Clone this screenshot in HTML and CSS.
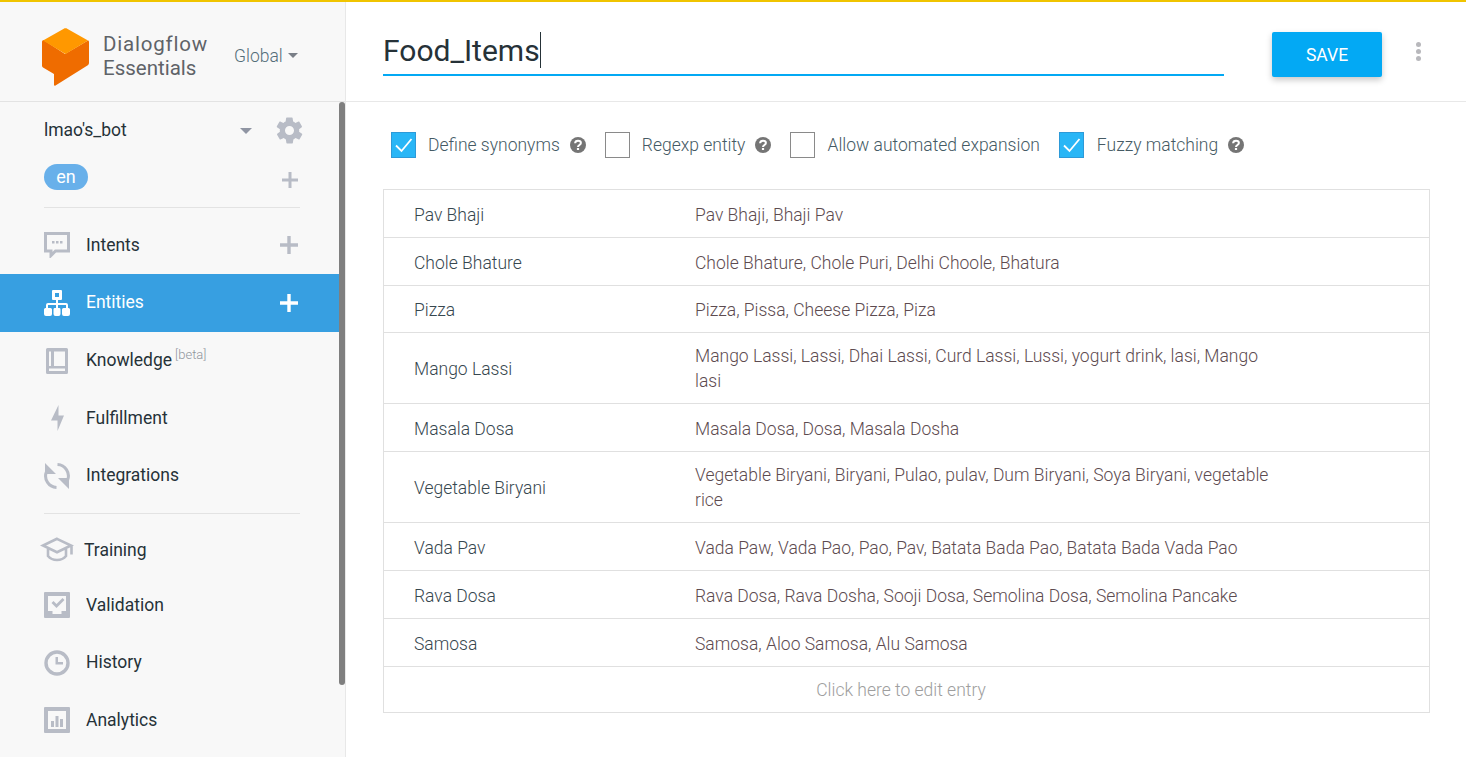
FILE: index.html
```html
<!DOCTYPE html>
<html lang="en">
<head>
  <meta charset="UTF-8">
  <title>Dialogflow Essentials</title>
  <link rel="stylesheet" href="styles.css">
</head>
<body>
  <div class="app">
    <aside class="sidebar">
      <div class="brand">
        <svg class="logo" width="47" height="59" viewBox="0 0 47 59">
          <path fill="#ef6c00" d="M1.500 12 23 26l23-13.500c.6 0 1 .6 1 1.500v21c0 1-.4 1.800-1.200 2.300L13.500 57.600c-.8.500-1.500.1-1.500-.8V46L1 39.500c-.6-.4-1-1-1-1.800V14c0-.8.600-2 1.500-2z"/>
          <path fill="#ff9800" d="M1 12.500 21.800.7c1-.6 2.400-.6 3.400 0L46 12.500 23.500 26z"/>
        </svg>
        <div class="brand-name"><span class="brand-first">Dialogflow</span><br>Essentials</div>
        <div class="region">Global <span class="caret"></span></div>
      </div>
      <div class="side-scroll">
        <div class="agent-row">
          <span class="agent-name">lmao's_bot</span>
          <span class="caret caret-agent"></span>
          <svg class="gear" width="31" height="31" viewBox="0 0 24 24"><path fill="#b8bcc6" d="M19.400 13c.1-.3.100-.7.100-1s0-.7-.1-1l2.100-1.600c.2-.2.200-.4.100-.6l-2-3.500c-.1-.2-.4-.3-.6-.2l-2.500 1c-.5-.4-1.100-.7-1.700-1l-.4-2.700c0-.2-.2-.4-.5-.4h-4c-.3 0-.5.200-.5.400l-.4 2.700c-.6.300-1.200.6-1.700 1l-2.500-1c-.2-.1-.5 0-.6.200l-2 3.500c-.1.200-.1.400.1.600L4.600 11c-.1.300-.1.700-.1 1s0 .7.100 1l-2.100 1.600c-.2.200-.2.400-.1.600l2 3.500c.1.200.4.300.6.200l2.500-1c.5.400 1.100.7 1.700 1l.4 2.700c0 .2.200.4.500.4h4c.3 0 .5-.2.500-.4l.4-2.700c.6-.3 1.200-.6 1.700-1l2.500 1c.2.100.5 0 .6-.2l2-3.500c.1-.2.100-.4-.1-.6zM12 15.500a3.500 3.500 0 1 1 0-7 3.500 3.500 0 0 1 0 7z"/></svg>
        </div>
        <div class="lang-row">
          <span class="lang">en</span>
          <svg class="plus plus-lang" width="16" height="16" viewBox="0 0 16 16"><path fill="#b8bcc6" d="M6.500 0h3v6.500H16v3H9.500V16h-3V9.500H0v-3h6.500z"/></svg>
        </div>
        <hr class="rule rule-top">
        <nav class="nav">
          <a class="nav-item">
            <svg class="nav-icon" width="26" height="26" viewBox="0 0 26 26"><path fill="none" stroke="#b8bcc6" stroke-width="3" d="M1.500 1.500h23V19H11.500l-4.500 4.500V19H1.500z"/><path fill="#b8bcc6" d="M8 9h2.500v2.500H8zm4 0h2.500v2.500H12zm4 0h2.500v2.500H16z"/></svg>
            <span>Intents</span>
            <svg class="plus" width="20" height="20" viewBox="0 0 20 20"><path fill="#b8bcc6" d="M8.300 1h3.400v7.300H19v3.400h-7.300V19H8.300v-7.300H1V8.300h7.300z"/></svg>
          </a>
          <a class="nav-item active">
            <svg class="nav-icon" width="26" height="26" viewBox="0 0 26 26"><path fill="#fff" d="M9 0h8a1 1 0 0 1 1 1v8a1 1 0 0 1-1 1h-3v3h8a2 2 0 0 1 2 2v3h-2v-3h-8v3h-2v-3H4v3H2v-3a2 2 0 0 1 2-2h8v-3H9a1 1 0 0 1-1-1V1a1 1 0 0 1 1-1zm2 3v4h4V3zM1.500 18h5A1.500 1.500 0 0 1 8 19.500v4.500a2 2 0 0 1-2 2H2a2 2 0 0 1-2-2v-4.500A1.500 1.500 0 0 1 1.500 18zm9 0h5a1.500 1.500 0 0 1 1 1.500v4.500a2 2 0 0 1-2 2h-3a2 2 0 0 1-2-2v-4.500a1.500 1.500 0 0 1 1-1.500zm9 0h5a1.500 1.500 0 0 1 1.500 1.500v4.500a2 2 0 0 1-2 2h-4a2 2 0 0 1-2-2v-4.500a1.500 1.500 0 0 1 1.500-1.500z"/></svg>
            <span>Entities</span>
            <svg class="plus" width="20" height="20" viewBox="0 0 20 20"><path fill="#fff" d="M8.300 1h3.400v7.300H19v3.400h-7.300V19H8.300v-7.300H1V8.300h7.300z"/></svg>
          </a>
          <a class="nav-item">
            <svg class="nav-icon" width="26" height="26" viewBox="0 0 26 26"><path fill="#b8bcc6" fill-rule="evenodd" d="M3.500 0h19A1.500 1.500 0 0 1 24 1.500v23a1.500 1.500 0 0 1-1.500 1.500h-19A1.500 1.500 0 0 1 2 24.500v-23A1.500 1.500 0 0 1 3.500 0zM5 3.500v14.500h2V3.500zm5 0v14.500h11V3.500zM5 20.500V23h16v-2.500z"/></svg>
            <span>Knowledge<sup class="beta">[beta]</sup></span>
          </a>
          <a class="nav-item">
            <svg class="nav-icon" width="26" height="26" viewBox="0 0 26 26"><path fill="#b8bcc6" d="M14.500 0v10.500H20L13.500 26V15.500H7z"/></svg>
            <span>Fulfillment</span>
          </a>
          <a class="nav-item">
            <svg class="nav-icon" width="26" height="26" viewBox="0 0 26 26"><path fill="none" stroke="#b8bcc6" stroke-width="3" d="M12.500 24.400A11.400 11.400 0 0 1 2.500 8.600M13.500 1.600A11.400 11.400 0 0 1 23.500 17.400"/><path fill="#b8bcc6" d="M1 0v11h11zM25 26V15H14z"/></svg>
            <span>Integrations</span>
          </a>
        </nav>
        <hr class="rule rule-mid">
        <nav class="nav nav-lower">
          <a class="nav-item nav-training">
            <svg class="nav-icon icon-cap" width="34" height="25" viewBox="0 0 34 25"><path fill="none" stroke="#b8bcc6" stroke-width="2.600" d="M17 1.800 31 8.500 17 15.200 3 8.500zM8 12v7c2 2.500 5.500 4 9 4s7-1.500 9-4v-7M31.500 8.500v9"/></svg>
            <span>Training</span>
          </a>
          <a class="nav-item">
            <svg class="nav-icon" width="26" height="26" viewBox="0 0 26 26"><path fill="#b8bcc6" fill-rule="evenodd" d="M1 0h24a1 1 0 0 1 1 1v24a1 1 0 0 1-1 1H1a1 1 0 0 1-1-1V1a1 1 0 0 1 1-1zm3 4v15h4.500v3h9v-3H22V4zm3.500 7 2-2 3 3 6-6 2 2-8 8z"/></svg>
            <span>Validation</span>
          </a>
          <a class="nav-item">
            <svg class="nav-icon" width="26" height="26" viewBox="0 0 26 26"><circle cx="13" cy="13" r="11" fill="none" stroke="#b8bcc6" stroke-width="3.400"/><path fill="#b8bcc6" d="M11.500 7H14v5h5v2.500h-7.500z"/></svg>
            <span>History</span>
          </a>
          <a class="nav-item">
            <svg class="nav-icon" width="26" height="26" viewBox="0 0 26 26"><path fill="#b8bcc6" fill-rule="evenodd" d="M1 0h24a1 1 0 0 1 1 1v24a1 1 0 0 1-1 1H1a1 1 0 0 1-1-1V1a1 1 0 0 1 1-1zm3 4v18h18V4zm3 10h3v6H7zm4.500-5h3v11h-3zm4.500 3h3v8h-3z"/></svg>
            <span>Analytics</span>
          </a>
        </nav>
        <div class="scrollbar"></div>
      </div>
    </aside>
    <main class="main">
      <header class="topbar">
        <div class="title-field">Food_Items<span class="cursor"></span></div>
        <button class="save-btn">SAVE</button>
        <div class="more"><i></i><i></i><i></i></div>
      </header>
      <section class="content">
        <div class="options">
          <label class="option">
            <span class="check checked"><svg width="24" height="24" viewBox="0 0 24 24"><path fill="none" stroke="#fff" stroke-width="1.800" d="m4 12.500 5.500 5.500 10-12"/></svg></span>
            <span class="option-text">Define synonyms</span>
            <svg class="help" width="16" height="16" viewBox="0 0 16 16"><circle cx="8" cy="8" r="8" fill="#757575"/><path fill="none" stroke="#fff" stroke-width="2" d="M5.100 6.200C5.200 4.500 6.400 3.700 8 3.700c1.700 0 2.900.9 2.900 2.300 0 2-2.900 2-2.900 4"/><path fill="#fff" d="M6.900 11h2.200v2H6.900z"/></svg>
          </label>
          <label class="option">
            <span class="check"></span>
            <span class="option-text">Regexp entity</span>
            <svg class="help" width="16" height="16" viewBox="0 0 16 16"><circle cx="8" cy="8" r="8" fill="#757575"/><path fill="none" stroke="#fff" stroke-width="2" d="M5.100 6.200C5.200 4.500 6.400 3.700 8 3.700c1.700 0 2.900.9 2.900 2.300 0 2-2.900 2-2.900 4"/><path fill="#fff" d="M6.900 11h2.200v2H6.900z"/></svg>
          </label>
          <label class="option">
            <span class="check"></span>
            <span class="option-text">Allow automated expansion</span>
          </label>
          <label class="option">
            <span class="check checked"><svg width="24" height="24" viewBox="0 0 24 24"><path fill="none" stroke="#fff" stroke-width="1.800" d="m4 12.500 5.500 5.500 10-12"/></svg></span>
            <span class="option-text">Fuzzy matching</span>
            <svg class="help" width="16" height="16" viewBox="0 0 16 16"><circle cx="8" cy="8" r="8" fill="#757575"/><path fill="none" stroke="#fff" stroke-width="2" d="M5.100 6.200C5.200 4.500 6.400 3.700 8 3.700c1.700 0 2.900.9 2.900 2.300 0 2-2.900 2-2.900 4"/><path fill="#fff" d="M6.900 11h2.200v2H6.900z"/></svg>
          </label>
        </div>
        <div class="entries">
          <div class="entry"><div class="entry-name">Pav Bhaji</div><div class="entry-syn">Pav Bhaji, Bhaji Pav</div></div>
          <div class="entry"><div class="entry-name">Chole Bhature</div><div class="entry-syn">Chole Bhature, Chole Puri, Delhi Choole, Bhatura</div></div>
          <div class="entry"><div class="entry-name">Pizza</div><div class="entry-syn">Pizza, Pissa, Cheese Pizza, Piza</div></div>
          <div class="entry entry-tall"><div class="entry-name">Mango Lassi</div><div class="entry-syn">Mango Lassi, Lassi, Dhai Lassi, Curd Lassi, Lussi, yogurt drink, lasi, Mango lasi</div></div>
          <div class="entry"><div class="entry-name">Masala Dosa</div><div class="entry-syn">Masala Dosa, Dosa, Masala Dosha</div></div>
          <div class="entry entry-tall"><div class="entry-name">Vegetable Biryani</div><div class="entry-syn">Vegetable Biryani, Biryani, Pulao, pulav, Dum Biryani, Soya Biryani, vegetable rice</div></div>
          <div class="entry"><div class="entry-name">Vada Pav</div><div class="entry-syn">Vada Paw, Vada Pao, Pao, Pav, Batata Bada Pao, Batata Bada Vada Pao</div></div>
          <div class="entry"><div class="entry-name">Rava Dosa</div><div class="entry-syn">Rava Dosa, Rava Dosha, Sooji Dosa, Semolina Dosa, Semolina Pancake</div></div>
          <div class="entry"><div class="entry-name">Samosa</div><div class="entry-syn">Samosa, Aloo Samosa, Alu Samosa</div></div>
          <div class="entry-add">Click here to edit entry</div>
        </div>
      </section>
    </main>
  </div>
</body>
</html>
```
FILE: styles.css
```css
* { box-sizing: border-box; }

html, body { height: 100%; }

body {
  margin: 0;
  overflow: hidden;
  background: #fff;
  color: #263238;
  font-family: Roboto, "Liberation Sans", sans-serif;
  font-size: 17.5px;
}

.app {
  display: flex;
  height: 757px;
  border-top: 2px solid #f0c400;
}

/* sidebar */
.sidebar {
  width: 346px;
  flex: none;
  display: flex;
  flex-direction: column;
  background: #f8f8f8;
  border-right: 1px solid #e8e8e8;
}

.brand {
  height: 100px;
  flex: none;
  display: flex;
  align-items: center;
  padding: 0 0 0 42px;
  border-bottom: 1px solid #e3e3e3;
}

.logo { flex: none; margin-top: 11px; }

.brand-name {
  margin-left: 14px;
  width: 131px;
  color: #5f6368;
  font-size: 20.5px;
  line-height: 24px;
  margin-top: 9px;
}

.brand-first { letter-spacing: .8px; }

.region {
  display: flex;
  align-items: center;
  color: #546e7a;
  font-size: 17.500px;
  font-weight: 300;
  margin-top: 8px;
}

.caret {
  display: inline-block;
  width: 0;
  height: 0;
  margin-left: 5px;
  border-left: 5px solid transparent;
  border-right: 5px solid transparent;
  border-top: 5px solid #7a7f87;
}

.side-scroll { position: relative; flex: 1; overflow: hidden; }

.scrollbar {
  position: absolute;
  top: 0;
  right: 0;
  width: 6px;
  height: 583px;
  border-radius: 3px;
  background: #7f7f7f;
}

.agent-row {
  display: flex;
  align-items: center;
  height: 56px;
  padding: 0 40px 0 44px;
}

.agent-name { flex: 1; }

.caret-agent {
  margin: 2px 22px 0 0;
  border-left-width: 6px;
  border-right-width: 6px;
  border-top: 6px solid #9095a3;
}

.gear { flex: none; }

.lang-row {
  display: flex;
  align-items: center;
  justify-content: space-between;
  height: 38px;
  padding: 0 47px 0 44px;
}

.lang {
  width: 44px;
  height: 26px;
  border-radius: 13px;
  background: #68b0ea;
  color: #fff;
  text-align: center;
  font-size: 18px;
  line-height: 26px;
}

.plus-lang { margin-top: 5px; }

.rule {
  height: 1px;
  margin: 0 45px 0 44px;
  border: 0;
  background: #e3e3e3;
}

.rule-top { margin-top: 11px; }
.rule-mid { margin-top: 8.500px; }

.nav-item {
  display: flex;
  align-items: center;
  height: 57.600px;
  padding: 0 46px 0 44px;
  color: #263238;
}

.nav-item span { flex: 1; margin-left: 16px; padding-bottom: 1px; }

.nav-item.active {
  background: #379fe1;
  color: #fff;
  height: 58px;
}

.nav-icon { flex: none; }

.nav { padding-top: 8.300px; }

.nav-lower { padding-top: 9.200px; }

.nav-training { height: 53px; padding-left: 40px; }

.nav-training span { margin-left: 10px; padding-bottom: 0; }

.beta {
  margin-left: 3px;
  color: #90959c;
  font-size: 13px;
  font-weight: 300;
  line-height: 0;
  vertical-align: 7px;
}

/* main column */
.main { flex: 1; display: flex; flex-direction: column; }

.topbar {
  height: 100px;
  flex: none;
  display: flex;
  align-items: flex-start;
  padding: 0 36px 0 37px;
  border-bottom: 1px solid #e8e8e8;
}

.title-field {
  width: 841px;
  height: 74px;
  padding-top: 30px;
  border-bottom: 2px solid #03a9f4;
  color: #263238;
  font-size: 30px;
  line-height: 38px;
}

.cursor {
  display: inline-block;
  width: 1px;
  height: 36px;
  background: #263238;
  vertical-align: -7px;
}

.save-btn {
  width: 110px;
  height: 45px;
  margin: 30px 0 0 48px;
  border: 0;
  border-radius: 2px;
  background: #03a9f4;
  color: #fff;
  font-family: inherit;
  font-size: 17.500px;
  box-shadow: 0 3px 6px rgba(0, 0, 0, .22);
}

.more {
  display: flex;
  flex-direction: column;
  gap: 2px;
  margin: 40px 0 0 34px;
}

.more i {
  width: 5px;
  height: 5px;
  border-radius: 50%;
  background: #b8b8bc;
}

.content { padding: 0 36px 0 37px; }

.options {
  display: flex;
  align-items: center;
  height: 87px;
  padding: 0 0 2px 8px;
}

.option {
  display: flex;
  align-items: center;
  margin-right: 19px;
  color: #455a64;
  font-weight: 300;
}

.option:last-child .check { margin-right: 13px; }

.check {
  width: 25px;
  height: 26px;
  margin-right: 12px;
  border: 1px solid #8a8a8a;
  background: #fff;
}

.check.checked {
  border-color: #2d9ad8;
  background: #29b6f6;
}

.check svg { display: block; }

.help { margin-left: 10px; flex: none; }

.entries { border: 1px solid #e0e0e0; }

.entry {
  display: flex;
  align-items: center;
  min-height: 47.800px;
  padding: 12.400px 0 8.600px 30px;
  border-bottom: 1px solid #e0e0e0;
  font-weight: 300;
  line-height: 25px;
  color: #37474f;
}

.entry-tall { padding: 11px 0 9px 30px; }

.entry-name { width: 281px; flex: none; }

.entry-syn { width: 590px; color: #5d4b50; }

.entry-add {
  height: 45.400px;
  padding-right: 11px;
  text-align: center;
  color: #9e9e9e;
  font-weight: 300;
  line-height: 47px;
}
```
